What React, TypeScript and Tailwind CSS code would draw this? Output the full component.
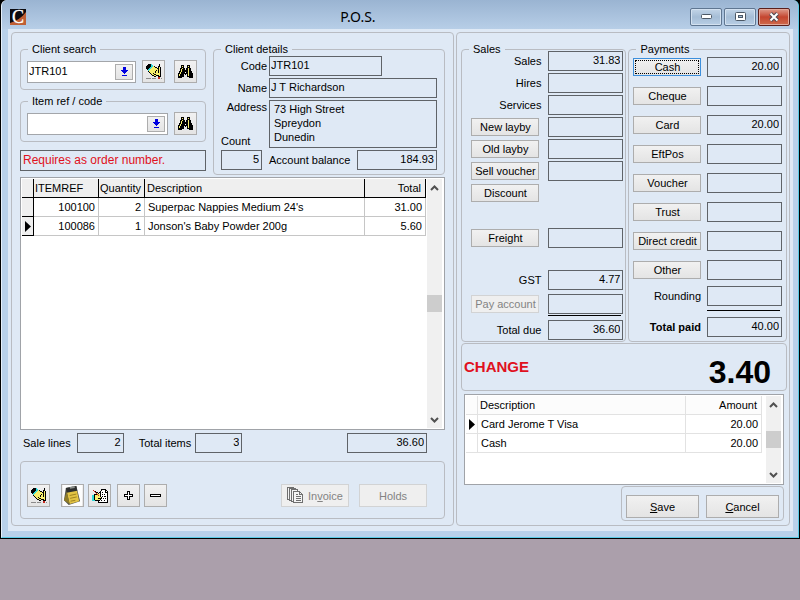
import type { ReactNode } from "react";
import clsx from "clsx";

const PALETTE: Record<string, string> = {
  k: "#000000",
  y: "#f7ee6c",
  c: "#2fd9d9",
  r: "#c8281e",
  g: "#8a8a8a",
  w: "#ffffff",
};

const BINOCULARS = [
  "...kkk...kkk...",
  "...kyk...kyk...",
  "...kkk...kkk...",
  "..kkykk.kkykk..",
  "..kykkk.kkykk..",
  "..kykkkkkkykk..",
  ".kkykkkkkkykkk.",
  ".kykkkkwkkykkk.",
  "kkykkkkkkkykkkk",
  "kykkkk.k.kykkkk",
  "kykkkk...kykkkk",
  "kkkkkk...kkkkkk",
  "kkkk.......kkkk",
];

const ERASER = [
  "..kkkc.......k..",
  ".kkkkcc......k..",
  "kkkkkccyk...kk..",
  "kkkkccyyykk.kyk.",
  "kkkccyyyyyykkyk.",
  ".kccyyyyyyyykyk.",
  "..cyyyyyyykykyk.",
  "..kyyyyyykyykyk.",
  "...kyyyyykyykyk.",
  "....kyykyyyyyyk.",
  ".....kyykkyyyyk.",
  "......kkyykkkyk.",
  "........kk..kkk.",
  "............rr..",
  "ggggg.gggg..rr.g",
];

const WRITE = [
  ".........kkkkk..",
  ".r.......kwwwkk.",
  "..rk....kwwwwkwk",
  "...rkk.kkwkwwkkk",
  "....ryk.kwwwwwwk",
  "..kkkryykwkwkwwk",
  "cckyyyrykwwwwwwk",
  "cckyyyyykwkwkkwk",
  "cckyyyyyykwwwwwk",
  "cckyyykkkkwkwkwk",
  "cckyyyyykwwwwwwk",
  "ccckkkkkwkwwkwwk",
  "......kwwwwwwwwk",
  "......kkkkkkkkkk",
];

function PixelIcon({ rows }: { rows: string[] }) {
  const w = rows[0].length;
  return (
    <svg width={w} height={rows.length} viewBox={`0 0 ${w} ${rows.length}`} className="shrink-0" shapeRendering="crispEdges">
      {rows.flatMap((row, y) =>
        [...row].map((ch, x) =>
          ch === "." ? null : <rect key={`${x}-${y}`} x={x} y={y} width="1" height="1" fill={PALETTE[ch]} />
        )
      )}
    </svg>
  );
}

function Clipboard() {
  return (
    <svg width="19" height="21" viewBox="0 0 20 22" className="shrink-0">
      <rect width="20" height="22" fill="#fdfdfd" />
      <path d="M3 3 L14 1 L18 17 L6 21 L1 16 Z" fill="#55564f" />
      <path d="M4 7 L14.500 5 L17 17 L7 20 Z" fill="#e3c445" />
      <path d="M4 7 L1 16 L7 20 Z" fill="#8f7c26" />
      <path d="M3 3 L14 1 L15 6 L4 8 Z" fill="#2d2f2e" />
      <path d="M7 2 l5 -1 l0.500 2 l-5 1 Z" fill="#8d918c" />
      <path d="M7 11 l7 -1.500 M7.500 14 l7 -1.500 M8 17 l5 -1" stroke="#9c8120" strokeWidth="1" />
    </svg>
  );
}

function Copies() {
  return (
    <svg width="17" height="17" viewBox="0 0 17 17" fill="#f4f4f4" stroke="#6f6f6f" shapeRendering="crispEdges">
      <path d="M0.500 0.500 h6 v12 h-6 Z" />
      <path d="M2.500 1.500 h6 v12 h-6 Z" />
      <path d="M4.500 2.500 h6 v12 h-6 Z" />
      <path d="M6.500 4.500 h6 l3 3 v8 h-9 Z M12.500 4.500 v3 h3 M8.500 7.500 h2 M8.500 9.500 h5 M8.500 11.500 h5 M8.500 13.500 h5" />
    </svg>
  );
}

function Group({ title, className, children }: { title: string; className?: string; children: ReactNode }) {
  return (
    <fieldset className={clsx("min-w-0 rounded border border-[#b9bcc2]", className)}>
      <legend className="ml-[7px] px-1 leading-[14px]">{title}</legend>
      {children}
    </fieldset>
  );
}

function Box({ label, value = "", className, id }: { label?: string; value?: string; className?: string; id?: string }) {
  return (
    <input
      id={id}
      readOnly
      aria-label={label}
      value={value}
      className={clsx("h-5 min-w-0 border border-[#5f6368] bg-transparent pb-0.5 outline-none", className)}
    />
  );
}

function Button({ children, className, disabled, label }: { children: ReactNode; className?: string; disabled?: boolean; label?: string }) {
  return (
    <button
      type="button"
      disabled={disabled}
      aria-label={label}
      className={clsx(
        "flex shrink-0 items-center justify-center whitespace-nowrap border",
        disabled ? "border-[#d2d3d4] bg-[#efefef] text-[#838383]" : "border-[#adadad] bg-linear-to-b from-[#f1f1f1] to-[#e4e4e4]",
        className
      )}
    >
      {children}
    </button>
  );
}

function Lookup({ label, value }: { label: string; value: string }) {
  return (
    <div className="flex h-[22px] min-w-0 flex-1 border border-[#a3a6aa] bg-white p-0.5 pl-0">
      <input aria-label={label} defaultValue={value} className="min-w-0 flex-1 pb-0.5 pl-px outline-none" />
      <Button label={`${label} list`} className="h-full w-[18px]">
        <svg width="7" height="9" viewBox="0 0 7 9" fill="#0000e0" shapeRendering="crispEdges">
          <path d="M2 0 h3 v3 h2 v1 h-1 v1 h-1 v1 h-1 v1 h-1 v-1 h-1 v-1 h-1 v-1 h-1 v-1 h2 Z M1 8 h5 v1 h-5 Z" />
        </svg>
      </Button>
    </div>
  );
}

function Chevron({ down }: { down?: boolean }) {
  return (
    <svg width="9" height="6" viewBox="0 0 9 6" fill="none" stroke="#505050" strokeWidth="2">
      <path d={down ? "M1 1 L4.500 4.500 L8 1" : "M1 5 L4.500 1.500 L8 5"} />
    </svg>
  );
}

function ScrollBar({ thumb }: { thumb: string }) {
  return (
    <div className="flex w-[15px] shrink-0 flex-col bg-[#f0f0f0]">
      <button type="button" aria-label="Scroll up" className="flex h-[17px] items-center justify-center">
        <Chevron />
      </button>
      <div className="flex flex-1 flex-col">
        <div className={thumb} />
        <div className="h-[17px] bg-[#cdcdcd]" />
      </div>
      <button type="button" aria-label="Scroll down" className="flex h-[17px] items-center justify-center">
        <Chevron down />
      </button>
    </div>
  );
}

function RowMarker() {
  return (
    <svg width="6" height="11" viewBox="0 0 6 11" className="mx-auto">
      <path d="M0 0 L6 5.500 L0 11 Z" />
    </svg>
  );
}

const saleLines = [
  { ref: "100100", qty: 2, description: "Superpac Nappies Medium 24's", total: "31.00" },
  { ref: "100086", qty: 1, description: "Jonson's Baby Powder 200g", total: "5.60" },
];

function SaleTable() {
  const th = "h-[19px] border-r border-b border-black bg-[#efefef] px-px font-normal";
  const td = "h-[19px] border-r border-b border-[#c6c6c6]";
  return (
    <div className="mt-0.5 flex h-[253px] border border-[#a0a3a8] bg-white p-px">
      <div className="min-w-0 flex-1 pr-px">
        <table className="w-full table-fixed border-separate border-spacing-0">
          <thead>
            <tr>
              <th className={clsx(th, "w-3")} aria-label="Current row" />
              <th className={clsx(th, "w-[65px] text-left")}>ITEMREF</th>
              <th className={clsx(th, "w-[46px] text-left")}>Quantity</th>
              <th className={clsx(th, "pl-0.5 text-left")}>Description</th>
              <th className={clsx(th, "w-[61px] pr-1 text-right")}>Total</th>
            </tr>
          </thead>
          <tbody>
            {saleLines.map((line, i) => (
              <tr key={line.ref}>
                <td className="h-[19px] border-r border-b border-black bg-[#efefef]">{i === 1 && <RowMarker />}</td>
                <td className={clsx(td, "pr-[3px] text-right")}>{line.ref}</td>
                <td className={clsx(td, "pr-[3px] text-right")}>{line.qty}</td>
                <td className={clsx(td, "pl-[3px]")}>{line.description}</td>
                <td className={clsx(td, "pr-[3px] text-right")}>{line.total}</td>
              </tr>
            ))}
          </tbody>
        </table>
      </div>
      <ScrollBar thumb="h-[99px]" />
      <div className="w-px" />
    </div>
  );
}

const paymentLines = [
  { description: "Card Jerome T Visa", amount: "20.00" },
  { description: "Cash", amount: "20.00" },
];

function PaymentTable() {
  const cell = "h-[19px] border-r border-b border-[#e2e2e2] font-normal";
  return (
    <div className="mx-[3px] mt-[3px] flex h-[91px] border border-[#a0a3a8] bg-white p-px">
      <div className="min-w-0 flex-1 pr-1">
        <table className="w-full table-fixed border-separate border-spacing-0">
          <thead>
            <tr className="bg-[#fcfcfc]">
              <th className={clsx(cell, "w-3")} aria-label="Current row" />
              <th className={clsx(cell, "pl-0.5 text-left")}>Description</th>
              <th className={clsx(cell, "w-[76px] pr-1 text-right")}>Amount</th>
            </tr>
          </thead>
          <tbody>
            {paymentLines.map((line, i) => (
              <tr key={line.description}>
                <td className={cell}>{i === 0 && <RowMarker />}</td>
                <td className={clsx(cell, "pl-[3px]")}>{line.description}</td>
                <td className={clsx(cell, "pr-[3px] text-right")}>{line.amount}</td>
              </tr>
            ))}
          </tbody>
        </table>
      </div>
      <ScrollBar thumb="h-[18px]" />
      <div className="w-px" />
    </div>
  );
}

function ClientDetails() {
  return (
    <Group title="Client details" className="flex-1">
      <div className="flex flex-col gap-0.5 pr-[7px] pb-1 pl-[7px]">
        <div className="flex items-center gap-0.5">
          <label htmlFor="code" className="w-[46px] text-right">Code</label>
          <Box id="code" value="JTR101" className="w-[113px] pl-px" />
        </div>
        <div className="flex items-center gap-0.5">
          <label htmlFor="name" className="w-[46px] text-right">Name</label>
          <Box id="name" value="J T Richardson" className="flex-1 pl-px" />
        </div>
        <div className="flex gap-0.5">
          <div className="flex w-[46px] flex-col justify-between">
            <label htmlFor="address" className="text-right">Address</label>
            <label htmlFor="count">Count</label>
          </div>
          <textarea
            id="address"
            readOnly
            value={"73 High Street\nSpreydon\nDunedin"}
            className="h-12 min-w-0 flex-1 resize-none overflow-hidden border border-[#5f6368] px-1 py-px leading-[14px] outline-none"
          />
        </div>
        <div className="flex items-center">
          <Box id="count" value="5" className="w-[41px] pr-0.5 text-right" />
          <label htmlFor="balance" className="flex-1 pl-[7px]">Account balance</label>
          <Box id="balance" value="184.93" className="w-20 pr-0.5 text-right" />
        </div>
      </div>
    </Group>
  );
}

function SalesRow({ name, value, button, disabled }: { name: string; value?: string; button?: boolean; disabled?: boolean }) {
  const id = `sales-${name}`;
  return (
    <div className="flex items-center justify-end">
      {button ? (
        <Button disabled={disabled} className="mr-[9px] h-[18px] w-[68px]">{name}</Button>
      ) : (
        <label htmlFor={id} className="mr-[7px]">{name}</label>
      )}
      <Box id={id} label={button ? name : undefined} value={value} className="w-[75px] pr-0.5 text-right" />
    </div>
  );
}

function Sales() {
  return (
    <Group title="Sales">
      <div className="-mt-[5px] flex flex-col gap-0.5 pr-0.5">
        <SalesRow name="Sales" value="31.83" />
        <SalesRow name="Hires" />
        <SalesRow name="Services" />
        <SalesRow name="New layby" button />
        <SalesRow name="Old layby" button />
        <SalesRow name="Sell voucher" button />
        <div className="flex h-5 items-center justify-end pr-[84px]">
          <Button className="h-[18px] w-[68px]">Discount</Button>
        </div>
      </div>
      <div className="mt-[25px] pr-0.5">
        <SalesRow name="Freight" button />
      </div>
      <div className="mt-[22px] flex flex-col gap-1 pr-0.5">
        <SalesRow name="GST" value="4.77" />
        <SalesRow name="Pay account" button disabled />
      </div>
      <div className="mt-px mr-1 ml-auto h-px w-[73px] bg-black" />
      <div className="mt-1 pr-0.5 pb-px">
        <SalesRow name="Total due" value="36.60" />
      </div>
    </Group>
  );
}

const payments = [
  { name: "Cash", value: "20.00" },
  { name: "Cheque" },
  { name: "Card", value: "20.00" },
  { name: "EftPos" },
  { name: "Voucher" },
  { name: "Trust" },
  { name: "Direct credit" },
  { name: "Other" },
];

function Payments() {
  return (
    <Group title="Payments">
      <div className="mt-px flex flex-col gap-[9px] px-1">
        {payments.map((p, i) => (
          <div key={p.name} className="flex items-center justify-between">
            <Button className={clsx("h-[18px] w-[68px]", i === 0 && "border-[#3c8fdc]! outline-1 -outline-offset-3 outline-dotted outline-black")}>
              {p.name}
            </Button>
            <Box label={p.name} value={p.value} className="w-[75px] pr-0.5 text-right" />
          </div>
        ))}
      </div>
      <div className="mt-1.5 flex items-center justify-end gap-1.5 pr-1">
        <label htmlFor="rounding">Rounding</label>
        <Box id="rounding" className="w-[75px]" />
      </div>
      <div className="mt-1 mr-1.5 ml-auto h-px w-[73px] bg-black" />
      <div className="mt-1.5 flex items-center justify-end gap-1.5 pr-1">
        <label htmlFor="total-paid" className="font-bold">Total paid</label>
        <Box id="total-paid" value="40.00" className="w-[75px] pr-0.5 text-right" />
      </div>
    </Group>
  );
}

function TitleBar() {
  const control = "flex h-[18px] w-8 items-center justify-center rounded-xs border";
  const plain = "border-[#5f7691] bg-linear-to-b from-[#c3d5e8] via-[#a5bdd6] to-[#b8cee5] shadow-[inset_0_0_0_1px_#d3e1f0]";
  return (
    <header className="flex h-[29px] items-center rounded-t-md bg-linear-to-b from-[#9ab4d2] to-[#b7cee7] pt-1 pr-2 pl-2">
      <svg width="16" height="16" viewBox="0 0 16 16" className="overflow-visible">
        <rect width="16" height="16" fill="#0b0b10" />
        <path d="M0 16 L0 14 Q10 11 16 3 L16 16 Z" fill="#bf5f35" />
        <text x="2" y="14" fill="#ffffff" stroke="#ffffff" strokeWidth="0.300" fontFamily="Liberation Serif, serif" fontSize="18">C</text>
      </svg>
      <h1 className="flex-1 text-center font-['Noto_Sans',sans-serif] text-sm leading-5">P.O.S.</h1>
      <div className="flex gap-0.5">
        <button type="button" aria-label="Minimise" className={clsx(control, plain)}>
          <svg width="11" height="5" viewBox="0 0 11 5">
            <rect x="0.500" y="0.500" width="10" height="4" rx="1" fill="#fff" stroke="#4c5866" />
          </svg>
        </button>
        <button type="button" aria-label="Maximise" className={clsx(control, plain)}>
          <svg width="11" height="9" viewBox="0 0 11 9">
            <rect x="0.500" y="0.500" width="10" height="8" rx="1" fill="#fff" stroke="#4c5866" />
            <rect x="3.500" y="3.500" width="4" height="2" fill="#a5bdd6" stroke="#4c5866" />
          </svg>
        </button>
        <button
          type="button"
          aria-label="Close"
          className={clsx(control, "border-[#5a1f1c] bg-linear-to-b from-[#dd9a8b] via-[#c4452f] to-[#cf6a4c] shadow-[inset_0_0_0_1px_#e3a899]")}
        >
          <svg width="12" height="10" viewBox="0 0 12 10" fill="none">
            <path d="M2.500 1.500 L9.500 8.500 M9.500 1.500 L2.500 8.500" stroke="#4d4a55" strokeWidth="4" />
            <path d="M2.500 1.500 L9.500 8.500 M9.500 1.500 L2.500 8.500" stroke="#fff" strokeWidth="2" />
          </svg>
        </button>
      </div>
    </header>
  );
}

export default function App() {
  const iconButton = "h-[23px] w-[23px]";
  const panel = "rounded border border-[#b9bcc2]";
  return (
    <div className="min-h-screen bg-[#ab9fab] font-['Liberation_Sans',Arial,sans-serif] text-[11px] leading-[14px] text-black">
      <div className="border-x border-b border-black bg-black">
        <div className="rounded-t-md border-r border-b border-l border-r-[#5bcbe6] border-b-[#5bcbe6] border-l-[#e6f0fa] bg-[#b9d1ea]">
          <TitleBar />
          <main className="mr-[5px] mb-1.5 ml-1.5 grid grid-cols-[443fr_334fr] gap-0.5 bg-[#dfe9f5] pt-[3px] pr-[3px] pb-[5px] pl-[3px]">
            <section className={clsx(panel, "min-w-0 p-2 pt-[9px] pb-1.5")}>
              <div className="flex gap-[7px]">
                <div className="flex w-[186px] shrink-0 flex-col">
                  <Group title="Client search">
                    <div className="flex items-center pt-1 pr-2 pb-1.5 pl-1.5">
                      <Lookup label="Client search" value="JTR101" />
                      <Button label="Clear client" className={clsx(iconButton, "mr-[9px] ml-1.5")}>
                        <PixelIcon rows={ERASER} />
                      </Button>
                      <Button label="Find client" className={iconButton}>
                        <PixelIcon rows={BINOCULARS} />
                      </Button>
                    </div>
                  </Group>
                  <Group title="Item ref / code" className="mt-1">
                    <div className="flex items-center gap-1.5 pt-1 pr-2 pb-1.5 pl-1.5">
                      <Lookup label="Item ref / code" value="" />
                      <Button label="Find item" className={iconButton}>
                        <PixelIcon rows={BINOCULARS} />
                      </Button>
                    </div>
                  </Group>
                  <p className="mt-2 border border-[#5f6368] px-0.5 text-xs leading-[19px] text-[#e01020]">Requires as order number.</p>
                </div>
                <ClientDetails />
              </div>

              <SaleTable />

              <div className="mt-[3px] flex items-center pl-[3px]">
                <label htmlFor="sale-lines">Sale lines</label>
                <Box id="sale-lines" value="2" className="ml-1.5 w-[47px] pr-0.5 text-right" />
                <label htmlFor="total-items" className="ml-[15px]">Total items</label>
                <Box id="total-items" value="3" className="ml-1 w-[47px] pr-0.5 text-right" />
                <Box label="Sale total" value="36.60" className="mr-[18px] ml-auto w-20 pr-0.5 text-right" />
              </div>

              <div className={clsx(panel, "mt-2 flex items-center pt-[22px] pr-[17px] pb-[11px] pl-1.5")}>
                <Button label="Clear sale" className={iconButton}>
                  <PixelIcon rows={ERASER} />
                </Button>
                <Button label="Notes" className={clsx(iconButton, "ml-[11px]")}>
                  <Clipboard />
                </Button>
                <Button label="Edit line" className={clsx(iconButton, "ml-1")}>
                  <PixelIcon rows={WRITE} />
                </Button>
                <Button label="Add line" className={clsx(iconButton, "ml-1.5")}>
                  <svg width="9" height="9" viewBox="0 0 9 9" fill="#fff" stroke="#000" shapeRendering="crispEdges">
                    <path d="M3.500 0.500 h2 v3 h3 v2 h-3 v3 h-2 v-3 h-3 v-2 h3 Z" />
                  </svg>
                </Button>
                <Button label="Remove line" className={clsx(iconButton, "ml-1")}>
                  <svg width="11" height="3" viewBox="0 0 11 3" fill="#fff" stroke="#000" shapeRendering="crispEdges">
                    <path d="M0.500 0.500 h10 v2 h-10 Z" />
                  </svg>
                </Button>
                <Button disabled className="ml-auto h-[23px] w-[68px] gap-1">
                  <Copies />
                  <span>In<u>v</u>oice</span>
                </Button>
                <Button disabled className="ml-2.5 h-[23px] w-[68px]">Holds</Button>
              </div>
            </section>

            <section className={clsx(panel, "min-w-0 p-1 pt-[9px] pr-0.5")}>
              <div className="grid grid-cols-[166fr_159fr] gap-0.5">
                <Sales />
                <Payments />
              </div>
              <div className={clsx(panel, "mt-px flex h-12 items-center justify-between pr-[15px] pl-0.5 font-bold")}>
                <span className="text-[15px] text-[#e01020]">CHANGE</span>
                <span className="pt-2.5 text-[32px] leading-9">3.40</span>
              </div>
              <PaymentTable />
              <div className={clsx(panel, "mt-px mr-[3px] ml-auto flex w-fit gap-[7px] px-1 pt-2 pb-0.5")}>
                <Button className="h-[23px] w-[73px]">
                  <span><u>S</u>ave</span>
                </Button>
                <Button className="h-[23px] w-[73px]">
                  <span><u>C</u>ancel</span>
                </Button>
              </div>
            </section>
          </main>
        </div>
      </div>
    </div>
  );
}
